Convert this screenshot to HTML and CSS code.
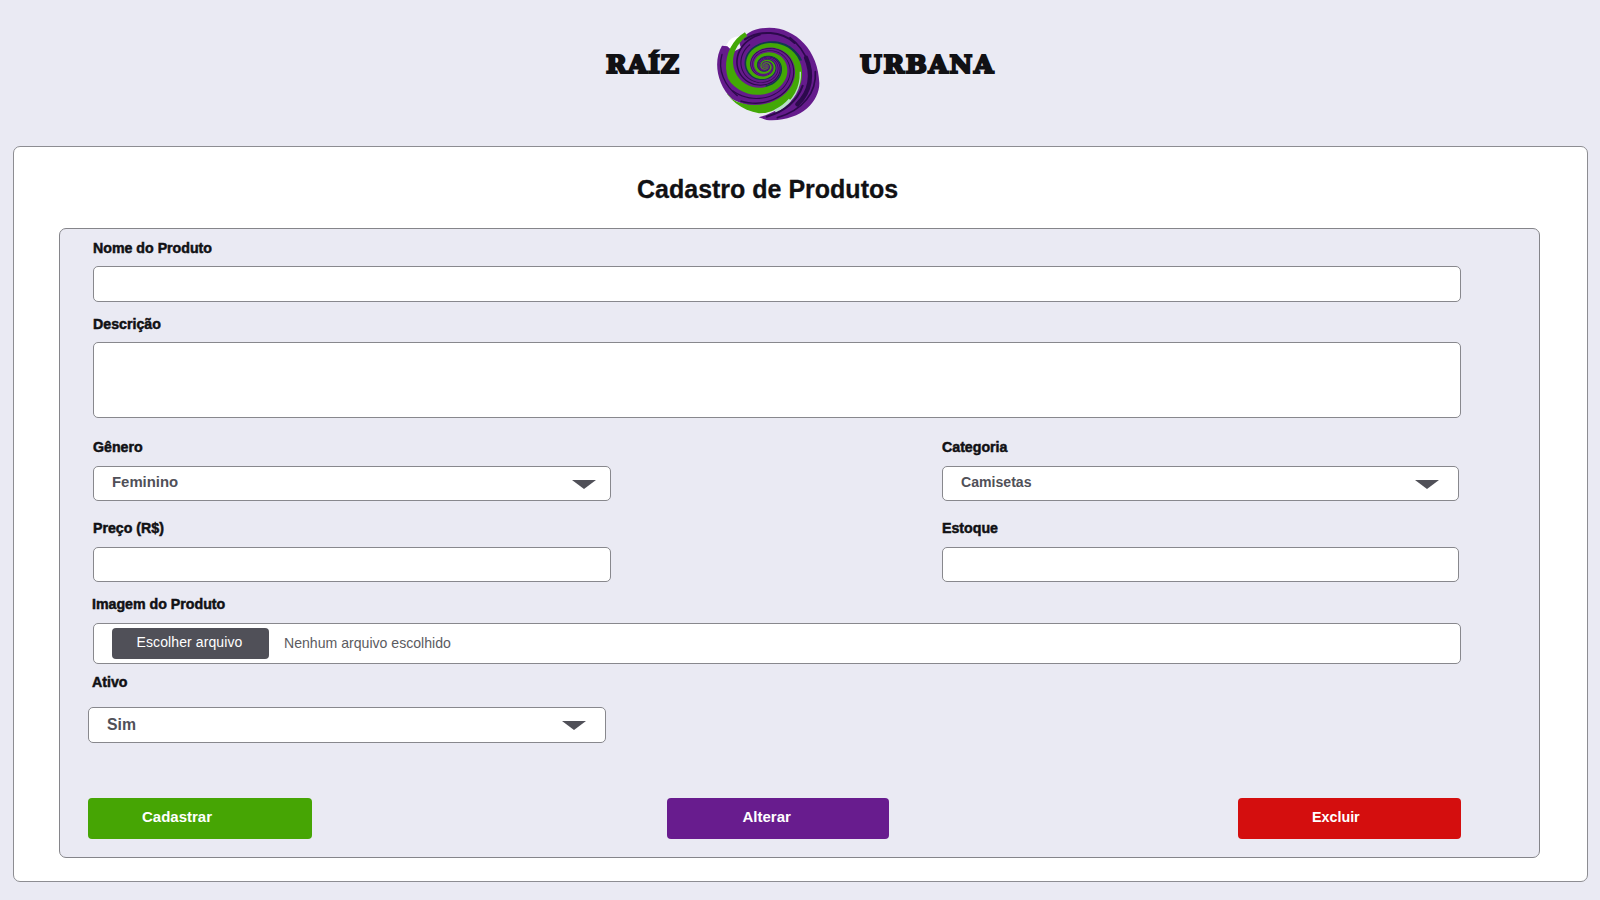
FILE: index.html
```html
<!DOCTYPE html>
<html lang="pt-BR">
<head>
<meta charset="utf-8">
<title>Raíz Urbana - Cadastro de Produtos</title>
<link rel="stylesheet" href="styles.css">
</head>
<body>
<header class="brand">
  <span class="brand-left">RAÍZ</span>
  <svg class="brand-logo" viewBox="0 0 420 345" aria-hidden="true">
    <path fill="#651b8c" d="M176 307 L200 315 C300 322 358 262 358 205 C356 108 288 38 208 38 C165 39 135 52 118 84 L150 180 L290 200 C285 250 240 290 176 307Z"/>
    <path fill="#fff" d="M78 92 Q90 64 120 64 L134 60 L100 112Z"/>
    <path fill="#651b8c" d="M66 92 L82 94 L100 110 L140 90 L285 110 C300 165 290 220 255 252 C210 284 150 282 96 252 C48 205 40 135 66 92Z"/>
    <g id="swirl"></g>
    <g fill="none" stroke="#2c0a4c" stroke-linecap="round">
      <path stroke-width="13" d="M318 128 C340 178 332 230 292 268"/>
      <path stroke-width="5" d="M346 170 C350 232 310 285 232 308"/>
      <path stroke-width="6" d="M308 212 C292 258 252 290 200 305"/>
      <path stroke-width="6" d="M135 73 C180 44 245 48 284 84"/>
      <path stroke-width="5" d="M270 68 Q308 96 326 146"/>
      <path stroke-width="4" d="M66 118 C52 165 74 212 112 242"/>
    </g>
    <path fill="none" stroke="#b9dfc9" stroke-width="4" d="M301 170 C303 220 283 256 238 284"/>
    <path fill="none" stroke="#b9dfc9" stroke-width="9" d="M270 254 Q252 275 225 288"/>
  </svg>
  <span class="brand-right">URBANA</span>
</header>
<main class="card">
  <h1 class="title">Cadastro de Produtos</h1>
  <form class="panel">
    <label class="label" for="nome">Nome do Produto</label>
    <input class="field" id="nome">
    <label class="label label-desc" for="desc">Descrição</label>
    <textarea class="field field-area" id="desc"></textarea>
    <div class="pair pair-first">
      <div class="col">
        <span class="label">Gênero</span>
        <div class="field select select-genero"><span>Feminino</span><svg class="arrow" viewBox="0 0 24 9"><path d="M0 0H24L12 9Z"/></svg></div>
      </div>
      <div class="col">
        <span class="label">Categoria</span>
        <div class="field select select-categoria"><span>Camisetas</span><svg class="arrow" viewBox="0 0 24 9"><path d="M0 0H24L12 9Z"/></svg></div>
      </div>
    </div>
    <div class="pair pair-second">
      <div class="col">
        <label class="label" for="preco">Preço (R$)</label>
        <input class="field" id="preco">
      </div>
      <div class="col">
        <label class="label" for="estoque">Estoque</label>
        <input class="field" id="estoque">
      </div>
    </div>
    <span class="label label-image">Imagem do Produto</span>
    <div class="field file">
      <button class="file-btn" type="button">Escolher arquivo</button>
      <span class="file-name">Nenhum arquivo escolhido</span>
    </div>
    <span class="label label-active">Ativo</span>
    <div class="field select select-ativo"><span>Sim</span><svg class="arrow" viewBox="0 0 24 9"><path d="M0 0H24L12 9Z"/></svg></div>
    <div class="actions">
      <button class="btn btn-add" type="button">Cadastrar</button>
      <button class="btn btn-edit" type="button">Alterar</button>
      <button class="btn btn-del" type="button">Excluir</button>
    </div>
  </form>
</main>
<script src="swirl.js"></script>
</body>
</html>
```
FILE: styles.css
```css
* { box-sizing: border-box; }
body {
  margin: 0;
  width: 1600px;
  height: 900px;
  overflow: hidden;
  background: #eaeaf3;
  color: #111114;
  font-family: "Liberation Sans", Arial, sans-serif;
}
.brand {
  display: flex;
  height: 146px;
  padding: 15px 0 0 606px;
  font: 700 25px/30px "DejaVu Serif", serif;
  letter-spacing: 1px;
  -webkit-text-stroke: 2.2px #111114;
}
.brand-left { width: 94px; padding-top: 35px; }
.brand-logo { width: 140px; height: 115px; -webkit-text-stroke: 0; }
.brand-right { padding: 35px 0 0 20px; letter-spacing: 1.6px; }
.card {
  width: 1575px;
  height: 736px;
  margin-left: 13px;
  padding: 0 47px 0 45px;
  background: #fff;
  border: 1px solid #8d8d92;
  border-radius: 7px;
}
.title {
  height: 81px;
  margin: 0;
  padding: 26px 0 0 578px;
  font-size: 25px;
  line-height: 32px;
  -webkit-text-stroke: .3px #111114;
}
.panel {
  display: flex;
  flex-direction: column;
  width: 1481px;
  height: 630px;
  padding: 9px 78px 0 33px;
  background: #eaeaf3;
  border: 1px solid #85858a;
  border-radius: 7px;
}
.label {
  display: block;
  height: 20px;
  margin-bottom: 8px;
  font-size: 14.2px;
  font-weight: 700;
  line-height: 20px;
  -webkit-text-stroke: .5px #111114;
}
.field {
  display: block;
  width: 100%;
  height: 36px;
  flex-shrink: 0;
  margin: 0;
  padding: 0;
  background: #fff;
  border: 1px solid #88888d;
  border-radius: 5px;
  resize: none;
}
.label-desc { margin-top: 12px; }
.field-area { height: 76px; }
.pair { display: flex; justify-content: space-between; padding-right: 2px; }
.pair-first { margin-top: 19px; }
.pair-second { margin-top: 17px; }
.col { width: 517px; }
.col:first-child { width: 518px; }
.pair .label { margin-bottom: 9px; }
.pair .field { height: 35px; }
.select {
  display: flex;
  justify-content: space-between;
  padding: 5px 14px 0 18px;
  color: #505058;
  font-weight: 700;
  line-height: 20px;
}
.select-genero { font-size: 14.9px; }
.select-categoria { padding-right: 19px; font-size: 14.1px; }
.arrow { width: 24px; height: 9px; margin-top: 7.5px; fill: #505058; }
.label-image { margin: 12px 0 9px -1px; }
.file { display: flex; height: 41px; padding: 4px 0 0 18px; }
.file-btn {
  width: 157px;
  height: 30.5px;
  padding: 0 2px 3px 0;
  border: 0;
  border-radius: 4px;
  background: #505058;
  color: #fff;
  font: 14px "Liberation Sans", sans-serif;
  letter-spacing: .1px;
}
.file-name { margin-left: 15px; padding-top: 5px; color: #5b5b61; font-size: 14.1px; line-height: 20px; }
.label-active { margin: 8px 0 15px -1px; }
.select-ativo { width: 518px; margin-left: -5px; padding: 7px 19px 0 18px; font-size: 15.8px; }
.select-ativo .arrow { margin-top: 6px; }
.actions {
  display: flex;
  justify-content: space-between;
  width: 1373px;
  margin: 55px 0 0 -5px;
}
.btn {
  width: 223px;
  height: 40.5px;
  padding: 0 0 3px;
  border: 0;
  border-radius: 4px;
  color: #fff;
  font: 700 15px "Liberation Sans", sans-serif;
  text-align: left;
}
.btn-add { width: 224px; background: #46a504; padding: 0 0 4px 54px; }
.btn-edit { width: 222px; background: #681c8e; padding: 0 0 4px 76px; margin-left: 5px; }
.btn-del { background: #d40e0e; padding-left: 74px; font-size: 14.3px; }
```
FILE: swirl.js
```js
// Builds the spiral bands of the logo; t counts quarter turns, starting at the bottom.
(function () {
  var cx = 197, cy = 153;
  var group = document.getElementById("swirl");
  function point(radius, t, max) {
    var a = t * Math.PI / 2, sx = Math.sin(a), sy = Math.cos(a);
    var m = 1.04 + 0.06 * (sx * sx - sy * sy) + 0.04 * sy - 0.025 * sx;
    var r = Math.min(radius * Math.pow(0.72, t) * m, max);
    return (cx + r * sx).toFixed(1) + " " + (cy + r * sy).toFixed(1);
  }
  function band(outer, inner, from, to, color, max) {
    var i, t, pts = [], back = [];
    for (i = 0; i <= 160; i++) {
      t = from + (to - from) * i / 160;
      pts.push(point(outer, t, max));
      back.unshift(point(inner, t, max - 1));
    }
    var path = document.createElementNS("http://www.w3.org/2000/svg", "path");
    path.setAttribute("d", "M" + pts.concat(back).join("L") + "Z");
    path.setAttribute("fill", color);
    group.appendChild(path);
  }
  // dark streaks inside the purple arms
  band(108, 104, -0.4, 9, "#2c0a4c", 150);
  band(94, 91, -0.6, 9, "#2c0a4c", 150);
  band(56, 53, -1.9, 8, "#2c0a4c", 150);
  band(48, 46, -1.6, 8, "#2c0a4c", 150);
  // teal edges and green arms
  band(149, 132, 1.1, 7, "#12394f", 200);
  band(138, 111, -0.6, 13, "#43a806", 143);
  band(64, 57, 0, 6, "#12394f", 200);
  band(82, 62, -1.65, 12, "#43a806", 119);
})();
```
